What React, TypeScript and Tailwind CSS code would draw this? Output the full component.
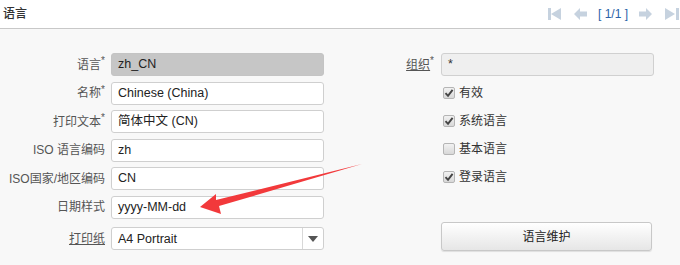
import React from "react";

const font = { fontFamily: '"Liberation Sans", Arial, "Noto Sans CJK SC", sans-serif' };

function Label({ text, star, link }: { text: string; star?: boolean; link?: boolean }) {
  return (
    <div className="flex h-[23px] items-center justify-end text-[12px] text-[#555] whitespace-nowrap">
      <span className={link ? "underline" : ""}>{text}</span>
      {star && <span className="relative -top-[4px] text-[10px]">*</span>}
    </div>
  );
}

function Input({ value, disabled }: { value: string; disabled?: boolean }) {
  return (
    <div
      className={
        "flex h-[23px] items-center rounded-[3px] border pl-[6px] text-[12.5px] text-[#222] " +
        (disabled ? "border-[#c4c4c4] bg-[#c6c6c6]" : "border-[#cfcfcf] bg-white")
      }
    >
      {value}
    </div>
  );
}

function Check({ checked, text }: { checked: boolean; text: string }) {
  return (
    <div className="flex h-[23px] items-center gap-[4px] text-[12px] text-[#333]">
      <span className="ml-[2px] flex h-[12px] w-[12px] items-center justify-center rounded-[2px] border border-[#b5b5b5] bg-gradient-to-b from-[#f2f2f2] to-[#d8d8d8]">
        {checked && (
          <svg width="10" height="10" viewBox="0 0 10 10">
            <path d="M1.5 5.2 L4 7.8 L8.6 1.8" fill="none" stroke="#444" strokeWidth="1.9" />
          </svg>
        )}
      </span>
      <span>{text}</span>
    </div>
  );
}

export default function App() {
  const nav = "#c6d2df";
  return (
    <div className="relative h-[265px] w-[680px] overflow-hidden bg-[#f8f8f8]" style={font}>
      <div className="flex h-[29px] items-center justify-between border-b border-[#c8c8c8] bg-white pl-[3px]">
        <span className="text-[12px] font-medium text-[#333]">语言</span>
        <div className="flex items-center">
          <svg width="14" height="12" viewBox="0 0 14 12">
            <rect x="0" y="0" width="3" height="12" fill={nav} />
            <path d="M3 6 L13 0 L13 12 Z" fill={nav} />
          </svg>
          <svg width="13" height="12" viewBox="0 0 13 12" className="ml-[12px]">
            <path d="M0 6 L6 0 L6 3.5 L13 3.5 L13 8.5 L6 8.5 L6 12 Z" fill={nav} />
          </svg>
          <span className="ml-[11px] text-[12px] text-[#2a62a8]">[ 1/1 ]</span>
          <svg width="13" height="12" viewBox="0 0 13 12" className="ml-[11px]">
            <path d="M13 6 L7 0 L7 3.5 L0 3.5 L0 8.5 L7 8.5 L7 12 Z" fill={nav} />
          </svg>
          <svg width="15" height="12" viewBox="0 0 15 12" className="ml-[13px]">
            <path d="M0 0 L10 6 L0 12 Z" fill={nav} />
            <rect x="11" y="0" width="3" height="12" fill={nav} />
          </svg>
        </div>
      </div>

      <div className="flex pt-[24px]">
        <div className="grid grid-cols-[105px_213px] gap-x-[6px] gap-y-[5px]">
          <Label text="语言" star />
          <Input value="zh_CN" disabled />
          <Label text="名称" star />
          <Input value="Chinese (China)" />
          <Label text="打印文本" star />
          <Input value="简体中文 (CN)" />
          <Label text="ISO 语言编码" />
          <Input value="zh" />
          <Label text="ISO国家/地区编码" />
          <Input value="CN" />
          <Label text="日期样式" />
          <Input value="yyyy-MM-dd" />
          <div className="mt-[3px]">
            <Label text="打印纸" link />
          </div>
          <div className="mt-[3px] flex h-[23px] items-center rounded-[3px] border border-[#cfcfcf] bg-white text-[12.5px] text-[#222]">
            <span className="flex-1 pl-[6px]">A4 Portrait</span>
            <span className="flex h-full w-[21px] items-center justify-center border-l border-[#d8d8d8]">
              <svg width="10" height="6" viewBox="0 0 10 6">
                <path d="M0 0 L10 0 L5 6 Z" fill="#555" />
              </svg>
            </span>
          </div>
        </div>

        <div className="ml-[6px] grid auto-rows-[minmax(23px,auto)] grid-cols-[104px_213px] gap-x-[7px] gap-y-[5px] self-start">
          <Label text="组织" star link />
          <div className="flex h-[23px] items-center rounded-[3px] border border-[#d0d0d0] bg-[#efefef] pl-[6px] text-[12.5px] text-[#333]">
            *
          </div>
          <div />
          <Check checked text="有效" />
          <div />
          <Check checked text="系统语言" />
          <div />
          <Check checked={false} text="基本语言" />
          <div />
          <Check checked text="登录语言" />
          <div />
          <div />
          <div />
          <button className="mt-[1px] flex h-[29px] w-[211px] items-center justify-center rounded-[3px] border border-[#c8c8c8] bg-gradient-to-b from-[#ffffff] to-[#e6e6e6] text-[12px] text-[#222] shadow-[0_1px_1px_rgba(0,0,0,0.1)]">
            语言维护
          </button>
        </div>
      </div>

      <svg className="pointer-events-none absolute left-0 top-0" width="680" height="265">
        <polygon points="200,207 216,194 216,200 362,164 219,206 221,214" fill="#f2393b" />
      </svg>
    </div>
  );
}
